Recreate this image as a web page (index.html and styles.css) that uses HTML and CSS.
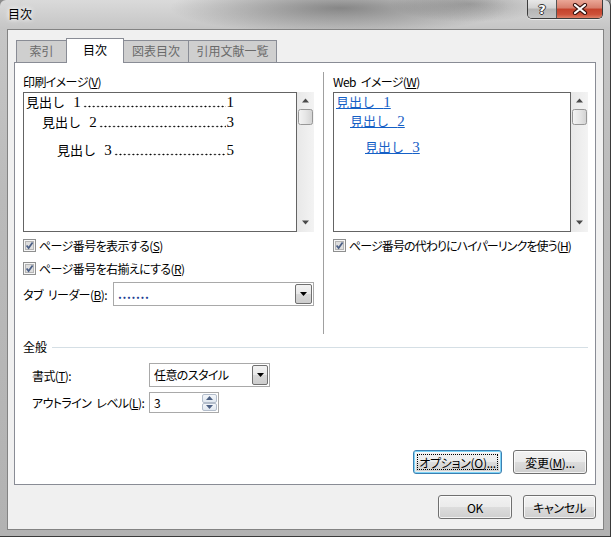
FILE: index.html
```html
<!DOCTYPE html>
<html lang="ja">
<head>
  <meta charset="UTF-8" />
  <title>目次</title>
  <link rel="stylesheet" href="styles.css">
</head>
<body>
<div class="window">
  <div class="titlebar">
    <span class="title">目次</span>
    <div class="caption">
      <span class="cap help">?</span>
      <span class="cap close">
        <svg width="16" height="12" viewBox="0 0 16 12">
          <path d="M3 2 L13 10 M13 2 L3 10" stroke="#3a1410" stroke-width="4.2" stroke-linecap="round" fill="none"/>
          <path d="M3 2 L13 10 M13 2 L3 10" stroke="#fff" stroke-width="2.2" stroke-linecap="round" fill="none"/>
        </svg>
      </span>
    </div>
  </div>

  <div class="client">
    <div class="tabs">
      <span class="tab tab-index">索引</span>
      <span class="tab tab-toc active">目次</span>
      <span class="tab tab-fig">図表目次</span>
      <span class="tab tab-cite">引用文献一覧</span>
    </div>

    <div class="panel">
      <div class="top">
        <div class="col col-print">
          <div class="label">印刷イメージ(<u>V</u>)</div>
          <div class="preview">
            <div class="preview-body">
              <div class="toc toc1"><span>見出し <span class="num">1</span></span><span class="dots"></span><span class="num">1</span></div>
              <div class="toc toc2"><span>見出し <span class="num">2</span></span><span class="dots"></span><span class="num">3</span></div>
              <div class="toc toc3"><span>見出し <span class="num">3</span></span><span class="dots"></span><span class="num">5</span></div>
            </div>
            <div class="vscroll">
              <svg width="17" height="140" viewBox="0 0 17 140">
                <defs>
                  <linearGradient id="track" x1="0" x2="1" y1="0" y2="0">
                    <stop offset="0" stop-color="#e8e8e8"/>
                    <stop offset="1" stop-color="#f3f3f3"/>
                  </linearGradient>
                  <linearGradient id="thumb" x1="0" x2="1" y1="0" y2="0">
                    <stop offset="0" stop-color="#f4f4f4"/>
                    <stop offset="0.5" stop-color="#e6e6e6"/>
                    <stop offset="1" stop-color="#d2d2d2"/>
                  </linearGradient>
                </defs>
                <rect width="17" height="140" fill="url(#track)"/>
                <path d="M5 10.5h7l-3.5-4z" fill="#4a4a4a"/>
                <rect x="1.5" y="17.5" width="14" height="15" rx="2" fill="url(#thumb)" stroke="#979797"/>
                <path d="M5 128.5h7l-3.5 4z" fill="#4a4a4a"/>
              </svg>
            </div>
          </div>

          <div class="check check-first">
            <svg width="13" height="13" viewBox="0 0 13 13"><rect x="0.5" y="0.5" width="12" height="12" fill="#f6f6f6" stroke="#8e8f8f"/><rect x="2.5" y="2.5" width="8" height="8" fill="#dedede" stroke="#b5b5b5"/><path d="M3.6 6.4 L5.6 9 L9.6 3.4" fill="none" stroke="#4b5f86" stroke-width="1.7"/></svg>
            <span>ページ番号を表示する(<u>S</u>)</span>
          </div>
          <div class="check">
            <svg width="13" height="13" viewBox="0 0 13 13"><rect x="0.5" y="0.5" width="12" height="12" fill="#f6f6f6" stroke="#8e8f8f"/><rect x="2.5" y="2.5" width="8" height="8" fill="#dedede" stroke="#b5b5b5"/><path d="M3.6 6.4 L5.6 9 L9.6 3.4" fill="none" stroke="#4b5f86" stroke-width="1.7"/></svg>
            <span>ページ番号を右揃えにする(<u>R</u>)</span>
          </div>

          <div class="field">
            <span class="field-label">タブ&nbsp;リーダー(<u>B</u>):</span>
            <div class="combo combo-leader">
              <span class="combo-text leader">.......</span>
              <span class="drop"><svg width="7" height="4" viewBox="0 0 7 4"><path d="M0 0h7l-3.5 4z" fill="#000"/></svg></span>
            </div>
          </div>
        </div>

        <div class="sep"></div>

        <div class="col col-web">
          <div class="label">Web イメージ(<u>W</u>)</div>
          <div class="preview">
            <div class="preview-body">
              <div class="wline w1"><span class="link">見出し <span class="num">1</span></span></div>
              <div class="wline w2"><span class="link">見出し <span class="num">2</span></span></div>
              <div class="wline w3"><span class="link">見出し <span class="num">3</span></span></div>
            </div>
            <div class="vscroll">
              <svg width="17" height="140" viewBox="0 0 17 140">
                <rect width="17" height="140" fill="url(#track)"/>
                <path d="M5 10.5h7l-3.5-4z" fill="#4a4a4a"/>
                <rect x="1.5" y="17.5" width="14" height="15" rx="2" fill="url(#thumb)" stroke="#979797"/>
                <path d="M5 128.5h7l-3.5 4z" fill="#4a4a4a"/>
              </svg>
            </div>
          </div>

          <div class="check check-first">
            <svg width="13" height="13" viewBox="0 0 13 13"><rect x="0.5" y="0.5" width="12" height="12" fill="#f6f6f6" stroke="#8e8f8f"/><rect x="2.5" y="2.5" width="8" height="8" fill="#dedede" stroke="#b5b5b5"/><path d="M3.6 6.4 L5.6 9 L9.6 3.4" fill="none" stroke="#4b5f86" stroke-width="1.7"/></svg>
            <span class="long-label">ページ番号の代わりにハイパーリンクを使う(<u>H</u>)</span>
          </div>
        </div>
      </div>

      <div class="group">
        <div class="group-head"><span>全般</span><span class="rule"></span></div>
        <div class="g-row g-row1">
          <span class="g-label">書式(<u>T</u>):</span>
          <div class="combo combo-format">
            <span class="combo-text">任意のスタイル</span>
            <span class="drop"><svg width="7" height="4" viewBox="0 0 7 4"><path d="M0 0h7l-3.5 4z" fill="#000"/></svg></span>
          </div>
        </div>
        <div class="g-row g-row2">
          <span class="g-label">アウトライン&nbsp;レベル(<u>L</u>):</span>
          <div class="spinner">
            <span class="spin-text">3</span>
            <span class="spin-btns">
              <span class="spin-btn"><svg width="7" height="4" viewBox="0 0 7 4"><path d="M0 4h7l-3.5-4z" fill="#4d6184"/></svg></span>
              <span class="spin-btn"><svg width="7" height="4" viewBox="0 0 7 4"><path d="M0 0h7l-3.5 4z" fill="#4d6184"/></svg></span>
            </span>
          </div>
        </div>
      </div>

      <div class="panel-btns">
        <div class="btn btn-options"><span class="focus-rect">オプション(<u>O</u>)...</span></div>
        <div class="btn btn-change">変更(<u>M</u>)...</div>
      </div>
    </div>

    <div class="dlg-btns">
      <div class="btn btn-ok">OK</div>
      <div class="btn btn-cancel">キャンセル</div>
    </div>
  </div>
</div>
</body>
</html>
```

FILE: styles.css
```css
* {
  box-sizing: border-box;
}

body {
  margin: 0;
  width: 611px;
  height: 537px;
  overflow: hidden;
  background: #8c8c8c;
  font-family: "Noto Sans CJK JP", sans-serif;
  font-size: 12px;
  font-feature-settings: "palt";
  letter-spacing: -0.6px;
  word-spacing: 3px;
  color: #000;
}

u {
  text-underline-offset: 1px;
}

.window {
  width: 611px;
  height: 537px;
  display: flex;
  flex-direction: column;
  border-right: 1px solid #3a3a3a;
  border-bottom: 1px solid #3a3a3a;
  border-radius: 6px 6px 0 0;
  background:
    radial-gradient(ellipse 170px 26px at 340px 8px, rgba(70,70,70,0.55), rgba(70,70,70,0)),
    radial-gradient(ellipse 80px 18px at 470px 4px, rgba(90,90,90,0.4), rgba(90,90,90,0)),
    linear-gradient(#dadada, #c6c6c6 28px, #bababa 200px, #b2b2b2);
}

/* title bar */
.titlebar {
  height: 29px;
  display: flex;
  justify-content: space-between;
  align-items: flex-start;
}

.title {
  padding: 7px 0 0 8px;
  line-height: 14px;
  letter-spacing: 0;
  text-shadow: 0 0 4px #fff, 0 0 6px #fff;
}

.caption {
  display: flex;
  margin-right: 7px;
  height: 19px;
  border: 1px solid #3c3c3c;
  border-top: none;
  border-radius: 0 0 5px 5px;
  overflow: hidden;
  box-shadow: 0 1px 0 rgba(255,255,255,0.6);
}

.cap {
  display: flex;
  align-items: center;
  justify-content: center;
  height: 18px;
}

.help {
  width: 29px;
  border-right: 1px solid #555;
  background: linear-gradient(#e8e8e8, #d2d2d2 45%, #b4b4b4 50%, #c4c4c4);
  font: bold 13px "DejaVu Sans", sans-serif;
  letter-spacing: 0;
  color: #fff;
  text-shadow: 1px 0 #333, -1px 0 #333, 0 1px #333, 0 -1px #333;
}

.close {
  width: 45px;
  background: linear-gradient(#eaa797, #d77e6c 45%, #c4422c 50%, #cd5139 80%, #de8068);
}

/* client area */
.client {
  flex: 1;
  margin: 0 6px 6px 7px;
  border: 1px solid #838383;
  background: #f0f0f0;
  padding: 8px 7px 10px 6px;
  display: flex;
  flex-direction: column;
}

.tabs {
  display: flex;
  align-items: flex-end;
  height: 24px;
  padding-left: 2px;
  z-index: 1;
  letter-spacing: 0;
}

.tab {
  height: 22px;
  margin-right: -1px;
  border: 1px solid #898c95;
  border-bottom: none;
  background: #cfcfcf;
  color: #6a6a6a;
  text-align: center;
  line-height: 20px;
}

.tab.active {
  height: 25px;
  margin-bottom: -1px;
  background: #fff;
  color: #000;
  line-height: 21px;
}

.tab-index { width: 51px; }
.tab-toc { width: 58px; }
.tab-fig { width: 66px; }
.tab-cite { width: 89px; }

.panel {
  height: 423px;
  border: 1px solid #898c95;
  background: #fff;
  padding: 0 7px 10px 8px;
  display: flex;
  flex-direction: column;
}

.top {
  display: flex;
  height: 271px;
}

.col {
  padding-top: 11px;
  display: flex;
  flex-direction: column;
}

.col-print { width: 291px; }
.col-web { width: 255px; }

.sep {
  width: 1px;
  background: #a0a0a0;
  margin: 9px 9px 0;
}

.label {
  height: 16px;
  line-height: 16px;
  margin-bottom: 2px;
}

.preview {
  display: flex;
  height: 140px;
}

.preview-body {
  flex: 1;
  border: 1px solid #646464;
  background: #fff;
  overflow: hidden;
}

.vscroll {
  width: 17px;
  flex: none;
}

.vscroll svg {
  display: block;
}

.toc,
.wline {
  height: 18px;
  line-height: 18px;
  font-family: "Liberation Serif", "Noto Sans CJK JP", serif;
  font-size: 13px;
  font-feature-settings: normal;
  letter-spacing: 0;
  word-spacing: 5px;
  white-space: nowrap;
}

.num {
  font-size: 15px;
}

.toc {
  display: flex;
  padding-right: 62px;
}

.toc1 { padding-left: 2px; }
.toc2 { padding-left: 18px; margin-top: 2px; }
.toc3 { padding-left: 33px; margin-top: 10px; }

.dots {
  flex: 1;
  margin: 0 1px 0 2px;
  background-image: radial-gradient(circle, #000 0.7px, rgba(0,0,0,0) 1.1px);
  background-size: 4.3px 3px;
  background-repeat: repeat-x;
  background-position: 0 12px;
}

.w1 { padding-left: 2px; }
.w2 { padding-left: 16px; margin-top: 1px; }
.w3 { padding-left: 31px; margin-top: 8px; }

.link {
  color: #1560c6;
  text-decoration: underline;
}

.check {
  display: flex;
  align-items: center;
  height: 18px;
  margin-top: 5px;
  white-space: nowrap;
}

.check-first {
  margin-top: 4px;
}

.check svg {
  flex: none;
  margin-right: 3px;
}

.long-label {
  letter-spacing: -0.9px;
}

.field {
  display: flex;
  align-items: center;
  height: 24px;
  margin-top: 5px;
}

.field-label {
  width: 90px;
  white-space: nowrap;
}

.combo {
  display: flex;
  height: 24px;
  border: 1px solid #a9a9a9;
  background: #fff;
  padding: 1px;
}

.combo-leader { flex: 1; }
.combo-format { width: 121px; }

.combo-text {
  flex: 1;
  padding-left: 3px;
  line-height: 20px;
  white-space: nowrap;
}

.leader {
  color: #1d3f94;
  font-weight: bold;
  letter-spacing: 0.6px;
}

.drop {
  width: 17px;
  border: 1px solid #707070;
  border-radius: 2px;
  background: linear-gradient(#f3f3f3, #e8e8e8 50%, #d8d8d8 50%, #cdcdcd);
  display: flex;
  align-items: center;
  justify-content: center;
}

.combo-format .drop {
  width: 16px;
}

.group {
  margin-top: 5px;
}

.group-head {
  display: flex;
  align-items: center;
  line-height: 16px;
  letter-spacing: 0;
}

.rule {
  flex: 1;
  height: 1px;
  background: #d5dfe5;
  margin-left: 5px;
}

.g-row {
  display: flex;
  align-items: center;
  padding-left: 9px;
}

.g-row1 { margin-top: 8px; height: 24px; }
.g-row2 { margin-top: 5px; height: 21px; }

.g-label {
  width: 117px;
  white-space: nowrap;
}

.spinner {
  display: flex;
  width: 70px;
  height: 21px;
  border: 1px solid #a9a9a9;
  background: #fff;
  padding: 1px;
}

.spin-text {
  flex: 1;
  padding-left: 3px;
  line-height: 17px;
}

.spin-btns {
  width: 15px;
  display: flex;
  flex-direction: column;
}

.spin-btn {
  flex: 1;
  border: 1px solid #b3bdcb;
  border-radius: 2px;
  background: linear-gradient(#f3f6fa, #e1e8f0);
  display: flex;
  align-items: center;
  justify-content: center;
}

/* buttons */
.panel-btns {
  margin-top: auto;
  display: flex;
  justify-content: flex-end;
  gap: 11px;
  padding-right: 1px;
}

.dlg-btns {
  margin-top: 10px;
  display: flex;
  justify-content: flex-end;
  gap: 11px;
}

.btn {
  height: 24px;
  border: 1px solid #707070;
  border-radius: 3px;
  background: linear-gradient(#f2f2f2, #ebebeb 50%, #dddddd 50%, #cfcfcf);
  box-shadow: inset 0 0 0 1px rgba(255,255,255,0.75);
  display: flex;
  align-items: center;
  justify-content: center;
  white-space: nowrap;
  letter-spacing: -0.3px;
}

.btn-options {
  width: 89px;
  border-color: #3c7fb1;
  box-shadow: inset 0 0 0 1px #7ed4f7, inset 0 0 0 2px rgba(255,255,255,0.6);
  padding: 3px;
}

.focus-rect {
  flex: 1;
  align-self: stretch;
  border: 1px dotted #000;
  display: flex;
  align-items: center;
  justify-content: center;
}

.btn-change { width: 74px; }
.btn-ok { width: 74px; }
.btn-cancel { width: 73px; }
```
